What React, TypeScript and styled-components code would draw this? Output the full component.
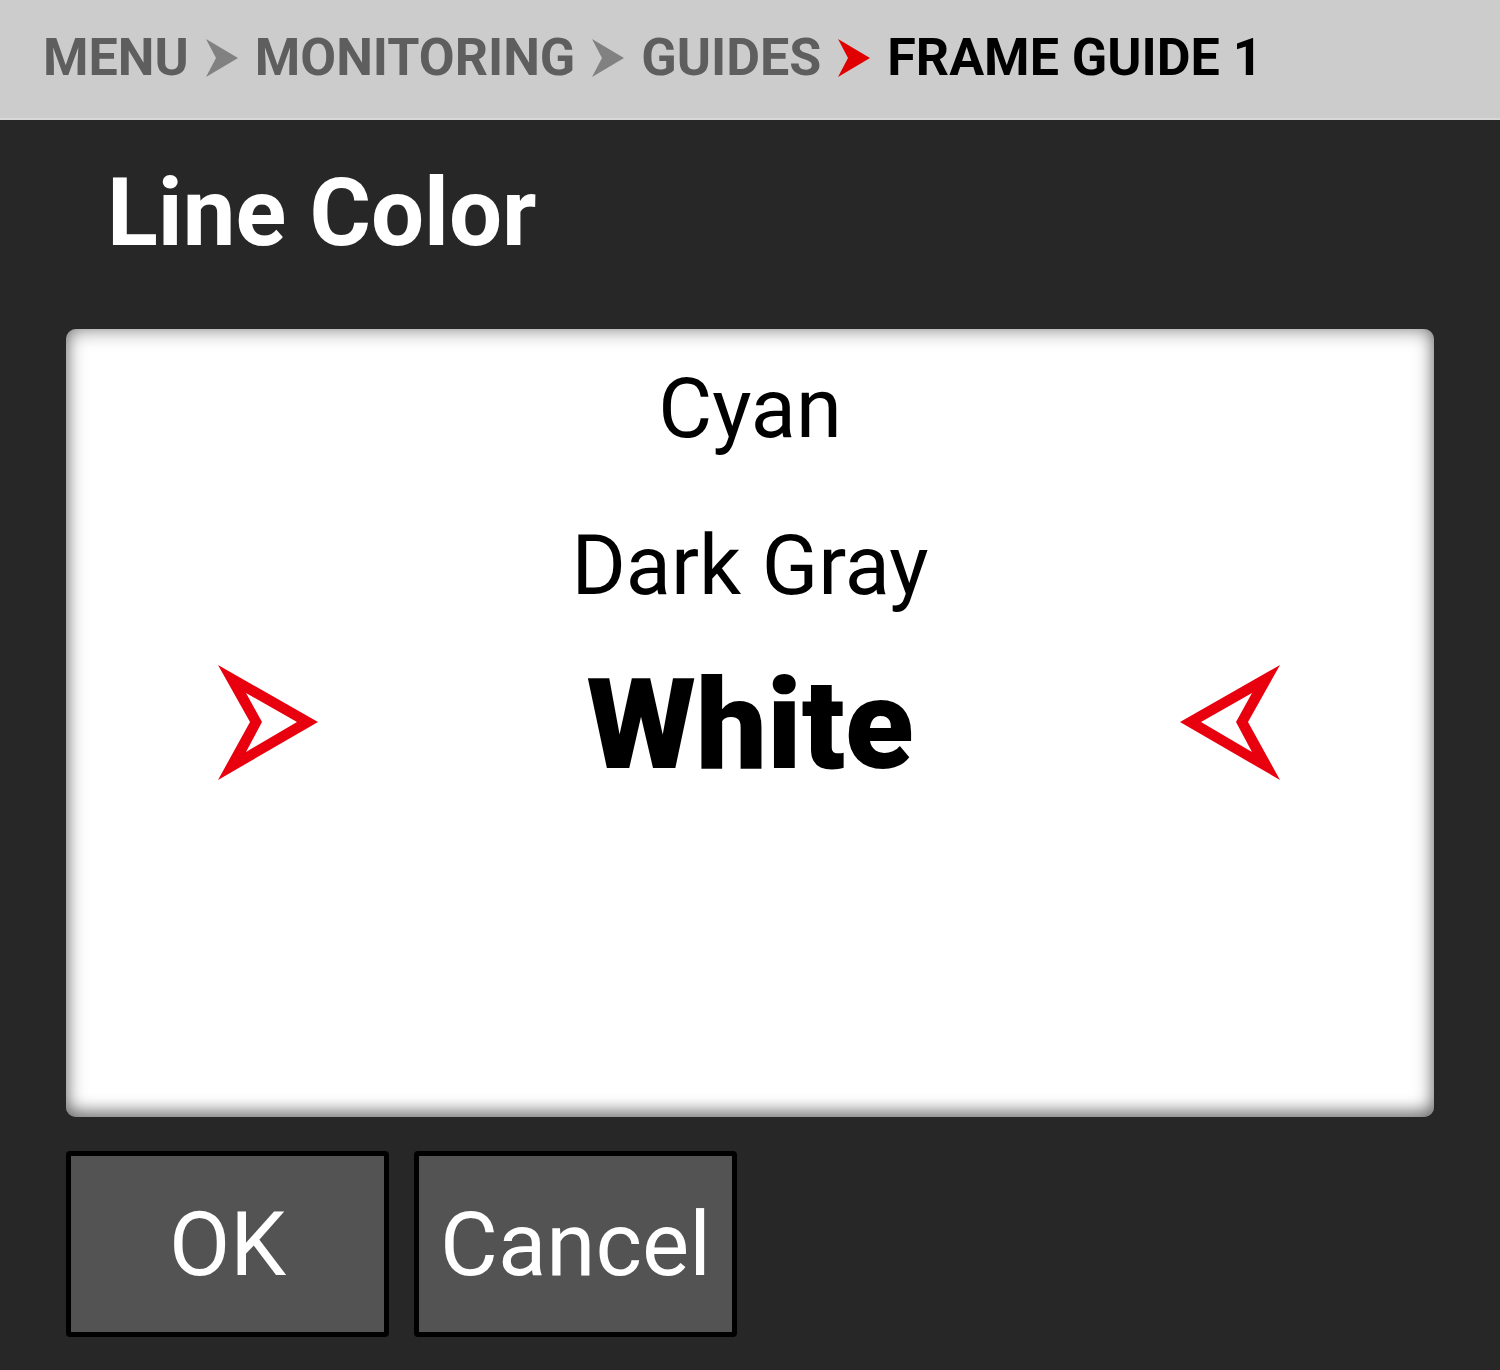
import React, { FC } from "react";
import styled, { createGlobalStyle } from "styled-components";

const crumbs: Array<string> = ["MENU", "MONITORING", "GUIDES"];
const options: Array<string> = ["Cyan", "Dark Gray", "White"];
const selected = "White";

const GlobalStyle = createGlobalStyle`
  html, body {
    margin: 0;
    padding: 0;
    background: #272727;
    font-family: Roboto, "Liberation Sans", sans-serif;
  }
`;

const Screen = styled.div`
  width: 1500px;
  height: 1370px;
  background: #272727;
  display: flex;
  flex-direction: column;
  overflow: hidden;
`;

const Header = styled.div`
  height: 120px;
  border-bottom: 2px solid #d8d8d8;
  background: #cccccc;
  display: flex;
  align-items: center;
  gap: 17px;
  padding: 0 0 2px 43px;
  box-sizing: border-box;
  flex-shrink: 0;
`;

const Crumb = styled.span<{ $current?: boolean }>`
  font-size: 52px;
  line-height: 1;
  font-weight: 700;
  color: ${(p) => (p.$current ? "#000000" : "#5e5e5e")};
`;

const Chevron: FC<{ red?: boolean }> = ({ red }) => (
  <svg width="32" height="38" viewBox="0 0 32 38">
    <path d="M0 0 L32 19 L0 38 L10 19 Z" fill={red ? "#e00000" : "#818181"} />
  </svg>
);

const Body = styled.div`
  flex: 1;
  display: flex;
  flex-direction: column;
  padding: 46px 66px 0;
`;

const Title = styled.h1`
  margin: 0 0 69px 41px;
  font-size: 94px;
  line-height: 1;
  font-weight: 700;
  color: #ffffff;
`;

const Panel = styled.div`
  height: 788px;
  background: #ffffff;
  border-radius: 10px;
  box-shadow: inset 0 0 20px rgba(0, 0, 0, 0.5), inset 0 -8px 14px rgba(0, 0, 0, 0.25);
  display: flex;
  flex-direction: column;
`;

const Row = styled.div`
  height: 157px;
  flex-shrink: 0;
  display: flex;
  align-items: center;
  justify-content: space-between;
  padding: 2px 154px 0 152px;
  box-sizing: border-box;
  position: relative;
`;

const Option = styled.span<{ $active?: boolean }>`
  position: absolute;
  left: 0;
  right: 0;
  top: ${(p) => (p.$active ? "19px" : "38px")};
  text-align: center;
  line-height: 1;
  color: #000000;
  font-size: ${(p) => (p.$active ? "126px" : "83px")};
  font-weight: ${(p) => (p.$active ? 900 : 400)};
`;

const Arrow: FC<{ flip?: boolean }> = ({ flip }) => (
  <svg
    width="100"
    height="115"
    viewBox="0 0 100 115"
    style={{ transform: flip ? "scaleX(-1)" : undefined }}
  >
    <path
      fillRule="evenodd"
      fill="#e8000e"
      d="M0 0 L100 57 L0 115 L32 57 Z M28 28 L44 57 L28 87 L79 57 Z"
    />
  </svg>
);

const Buttons = styled.div`
  display: flex;
  gap: 25px;
  margin-top: 34px;
`;

const Button = styled.button`
  width: 323px;
  height: 186px;
  box-sizing: border-box;
  border: 5px solid #000000;
  border-radius: 4px;
  background: #535353;
  color: #ffffff;
  font-family: Roboto, "Liberation Sans", sans-serif;
  font-size: 89px;
  font-weight: 400;
  line-height: 1;
  padding: 0;
  display: flex;
  align-items: center;
  justify-content: center;
`;

const App: FC = () => {
  return (
    <Screen>
      <GlobalStyle />
      <Header>
        {crumbs.map((item) => (
          <React.Fragment key={item}>
            <Crumb>{item}</Crumb>
            <Chevron red={item === "GUIDES"} />
          </React.Fragment>
        ))}
        <Crumb $current>FRAME GUIDE 1</Crumb>
      </Header>
      <Body>
        <Title>Line Color</Title>
        <Panel>
          {options.map((item) => (
            <Row key={item}>
              <Option $active={item === selected}>{item}</Option>
              {item === selected && (
                <>
                  <Arrow />
                  <Arrow flip />
                </>
              )}
            </Row>
          ))}
        </Panel>
        <Buttons>
          <Button>OK</Button>
          <Button>Cancel</Button>
        </Buttons>
      </Body>
    </Screen>
  );
};

export default App;
